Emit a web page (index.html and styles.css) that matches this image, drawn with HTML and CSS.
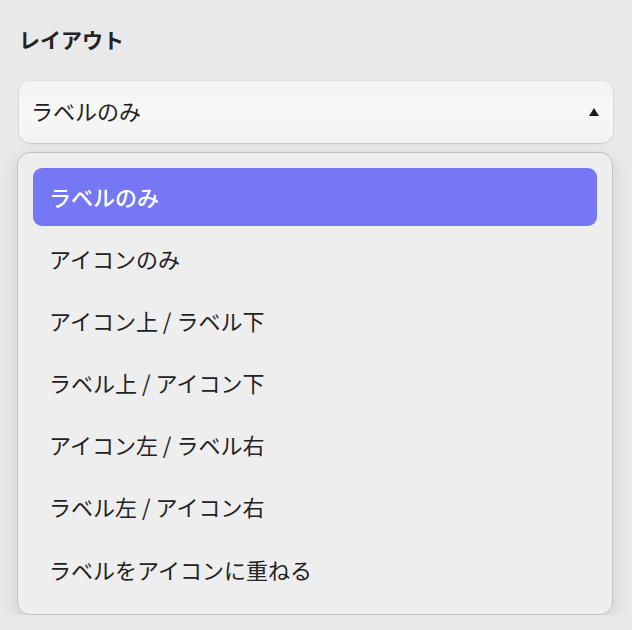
FILE: index.html
```html
<!DOCTYPE html>
<html lang="ja">
<head>
<meta charset="utf-8">
<link rel="stylesheet" href="styles.css">
</head>
<body>
<div class="panel">
  <div class="title">レイアウト</div>
  <div class="select">
    <span class="select-value">ラベルのみ</span>
    <svg class="arrow" width="10" height="8" viewBox="0 0 10 8"><path d="M5 0 L10 8 L0 8 Z" fill="#1b1b1b"/></svg>
  </div>
  <ul class="menu">
    <li class="item selected">ラベルのみ</li>
    <li class="item">アイコンのみ</li>
    <li class="item">アイコン上 / ラベル下</li>
    <li class="item">ラベル上 / アイコン下</li>
    <li class="item">アイコン左 / ラベル右</li>
    <li class="item">ラベル左 / アイコン右</li>
    <li class="item">ラベルをアイコンに重ねる</li>
  </ul>
</div>
</body>
</html>
```
FILE: styles.css
```css
html, body {
  margin: 0;
  padding: 0;
  background: #e9e9e9;
}
body {
  font-family: "Noto Sans CJK JP", "Noto Sans", sans-serif;
  color: #222222;
}
.panel {
  padding: 25px 19px 0 19px;
  width: 594px;
}
.title {
  font-size: 21px;
  font-weight: 700;
  line-height: 28px;
  padding-bottom: 2px;
}
.select {
  margin-top: 26px;
  height: 62px;
  box-sizing: border-box;
  border-radius: 12px;
  background: linear-gradient(#f4f4f4, #f7f7f7 50%, #f3f3f3);
  box-shadow: 0 1px 2px rgba(0,0,0,0.12), 0 0 0 1px rgba(0,0,0,0.03);
  display: flex;
  align-items: center;
  justify-content: space-between;
  padding: 0 14px 0 12px;
}
.select-value {
  font-size: 22px;
  line-height: 30px;
  padding-bottom: 4px;
}
.arrow {
  display: block;
}
.menu {
  list-style: none;
  margin: 9px 0 0 -2px;
  width: 596px;
  box-sizing: border-box;
  padding: 15px;
  background: #eeeeee;
  border: 1px solid #c4c4c4;
  border-radius: 13px;
  box-shadow: 0 6px 18px rgba(0,0,0,0.12);
  display: flex;
  flex-direction: column;
  gap: 4.2px;
}
.item {
  height: 58px;
  box-sizing: border-box;
  display: flex;
  align-items: center;
  padding: 0 0 3px 16px;
  border-radius: 9px;
  font-size: 22px;
  line-height: 30px;
}
.item.selected {
  background: #7577f5;
  color: #ffffff;
  font-weight: 500;
}
```
